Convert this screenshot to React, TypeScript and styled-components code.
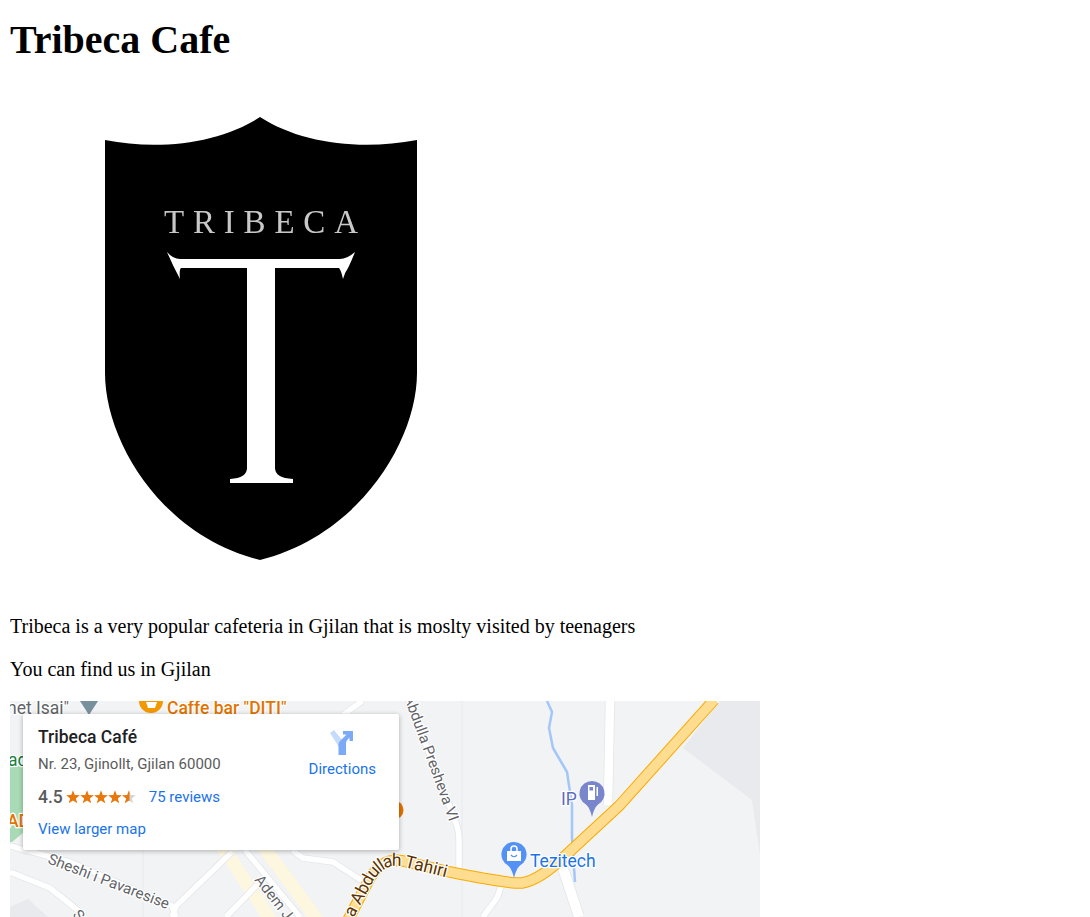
import styled, { createGlobalStyle } from 'styled-components';

const GlobalStyle = createGlobalStyle`
	html {
		overflow: hidden;
	}
	body {
		margin: 0 10px;
		background: #fff;
		color: #000;
		font-family: 'Liberation Serif', serif;
		font-size: 20px;
	}
`;
const Title = styled.h1`
	margin: 0;
	padding: 17px 0 27px;
	font-size: 40px;
	line-height: 46px;
	font-weight: 700;
`;
const Logo = styled.svg`
	display: block;
	width: 500px;
	height: 505px;
`;
const Paragraph = styled.p`
	margin: 20px 0;
	line-height: 23px;
`;
const MapFrame = styled.div`
	position: relative;
	width: 750px;
	height: 216px;
	overflow: hidden;
	background: #f1f3f4;
	font-family: Roboto, sans-serif;
`;
const MapCanvas = styled.svg`
	display: block;
	width: 750px;
	height: 216px;
`;
const MapLabel = styled.text<{ $tone: string; $size?: number; $weight?: number }>`
	font-family: Roboto, sans-serif;
	font-size: ${(props) => props.$size || 17.5}px;
	font-weight: ${(props) => props.$weight || 400};
	fill: ${(props) => props.$tone};
	stroke: #fff;
	stroke-width: 2.5px;
	stroke-linejoin: round;
	paint-order: stroke;
`;
const PlaceCard = styled.div`
	position: absolute;
	left: 13px;
	top: 13px;
	box-sizing: border-box;
	width: 376px;
	height: 136px;
	padding: 11px 15px;
	display: flex;
	justify-content: space-between;
	background: #fff;
	border-radius: 2px;
	box-shadow: 0 1px 5px rgba(0, 0, 0, 0.3);
`;
const PlaceInfo = styled.div`
	display: flex;
	flex-direction: column;
`;
const PlaceName = styled.div`
	font-size: 17.5px;
	font-weight: 500;
	line-height: 24px;
	color: #202124;
`;
const PlaceAddress = styled.div`
	margin-top: 4px;
	font-size: 15px;
	line-height: 22px;
	color: #5b5b5b;
`;
const RatingRow = styled.div`
	margin-top: 10px;
	display: flex;
	align-items: center;
	height: 24px;
`;
const RatingValue = styled.span`
	font-size: 17.5px;
	font-weight: 500;
	color: #5b5b5b;
`;
const Stars = styled.svg`
	margin: 0 13px 0 3px;
	width: 70px;
	height: 15px;
`;
const MapLink = styled.a`
	font-size: 15px;
	line-height: 20px;
	color: #1a73e8;
	text-decoration: none;
`;
const LargerMap = styled(MapLink)`
	margin-top: 10px;
`;
const DirectionsBox = styled.div`
	margin: 5px 8px 0 0;
	display: flex;
	flex-direction: column;
	align-items: center;
	gap: 4px;
`;

const STAR =
	'M7 .3 8.76 5.07 13.85 5.28 9.85 8.43 11.23 13.32 7 10.5 2.77 13.32 4.15 8.43 .15 5.28 5.24 5.07Z';
const MAIN_ROAD =
	'M714 700 619 806 566 855Q540 880 522 883 510 884 450 872L403 861Q383 857 370 878L348 920';
const THIN_ROADS = [
	'M405 690 457 826Q459 832 459 840V868',
	'M10 846 70 862 172 906 176 917',
	'M10 872 50 888 75 908 85 917',
	'M172 917 176 906 232 852',
	'M226 917 258 884',
	'M245 850 300 917',
	'M292 850 303 858 333 862 364 882',
	'M502 884 497 898 483 917',
	'M343 715 362 701',
];

const RatingStars = () => (
	<Stars viewBox='0 0 70 15'>
		<defs>
			<clipPath id='half-star'>
				<rect x='56' y='0' width='7.5' height='15' />
			</clipPath>
		</defs>
		{[0, 14, 28, 42].map((x) => (
			<path key={x} d={STAR} fill='#e8770c' transform={`translate(${x} 0)`} />
		))}
		<path d={STAR} fill='#d6d6d6' transform='translate(56 0)' />
		<g clipPath='url(#half-star)'>
			<path d={STAR} fill='#e8770c' transform='translate(56 0)' />
		</g>
	</Stars>
);

const DirectionsIcon = () => (
	<svg width='26' height='25' viewBox='0 0 26 25'>
		<path d='M1 3 5 0 13.5 10.5 13.5 17 10 17Z' fill='#c6dafc' />
		<path
			d='M9.5 25V14.5Q9.5 12.5 11 11L17.5 4.5 14 4.5 14 1 24 1 24 11 20.5 11 20.5 7.5 17.5 11Q17 12 17 14V25Z'
			fill='#7baaf7'
		/>
	</svg>
);

const CrestLogo = () => (
	<Logo viewBox='10 90 500 505'>
		<defs>
			<filter id='soft'>
				<feGaussianBlur stdDeviation='0.7' />
			</filter>
		</defs>
		<g filter='url(#soft)'>
			<path
				d='M105 140C160 151 220 143 260 117C300 143 360 151 417 140V373C417 440 360 535 260 560C160 535 105 440 105 373Z'
				fill='#000'
			/>
			<text
				x='164'
				y='233'
				textLength='194'
				fontFamily='Liberation Serif, serif'
				fontSize='33'
				fill='#c8c8c8'
			>
				TRIBECA
			</text>
			<path
				d='M167 252Q173 259 180 259H247 275 340Q347 259 355 252 351 262 348 268 345 272 343 279 341 270 339 268H275V468Q275 478 293 479V483H230V479Q247 478 247 468V268H181Q179 270 180 279 173 266 167 252Z'
				fill='#fff'
			/>
		</g>
	</Logo>
);

const MapDrawing = () => (
	<MapCanvas viewBox='10 701 750 216'>
		<defs>
			<path id='tahiri-road' d='M336 938 368 878Q383 855 405 861L470 877' />
		</defs>
		<rect x='10' y='701' width='750' height='216' fill='#f1f3f4' />
		<path d='M720 701H760V855L752 800 683 748Z' fill='#e8eaed' />
		<path d='M10 917V907L28 899 48 917Z' fill='#e8eaed' />
		<path d='M10 766H24V832L12 842H10Z' fill='#a8dab5' />
		<path d='M143 850V917M462 701V917' stroke='#e8eaed' fill='none' />
		<g fill='none' stroke='#fef7e0' strokeWidth='13'>
			<path d='M222 846 272 922' />
			<path d='M263 846 319 922' />
		</g>
		<g fill='none' stroke='#e3e5e8' strokeWidth='7'>
			{THIN_ROADS.map((d) => (
				<path key={d} d={d} />
			))}
		</g>
		<g fill='none' stroke='#fff' strokeWidth='5.5'>
			{THIN_ROADS.map((d) => (
				<path key={d} d={d} />
			))}
		</g>
		<path d='M610 701 608 805' fill='none' stroke='#e3e5e8' strokeWidth='10' />
		<path d='M610 701 608 805' fill='none' stroke='#fff' strokeWidth='8.5' />
		<path d='M563 868 579 917' fill='none' stroke='#e3e5e8' strokeWidth='11.5' />
		<path d='M563 868 579 917' fill='none' stroke='#fff' strokeWidth='10' />
		<path
			d='M547 701 552 712 549 728 553 748 567 772 572 805 572 838 575 882'
			fill='none'
			stroke='#a3c7f8'
			strokeWidth='2.5'
		/>
		<g fill='none'>
			<path d={MAIN_ROAD} stroke='#f9ab00' strokeWidth='11.5' />
			<path d={MAIN_ROAD} stroke='#fedc90' strokeWidth='9.5' />
		</g>
		<circle cx='394' cy='810' r='9.5' fill='#e37400' />
		<circle cx='151' cy='701' r='12' fill='#f29900' />
		<path d='M146 702H157L155 708H148Z' fill='#fff' />
		<path d='M80 701H98L89 715Z' fill='#78909c' />
		<MapLabel x='7' y='714' $tone='#5f6368'>
			net Isai"
		</MapLabel>
		<MapLabel x='167' y='714' $tone='#e37400' $weight={500}>
			Caffe bar "DITI"
		</MapLabel>
		<MapLabel x='8' y='766' $tone='#188038'>
			ad
		</MapLabel>
		<MapLabel x='7' y='827' $tone='#e37400' $weight={500}>
			AD
		</MapLabel>
		<MapLabel x='47' y='863' $tone='#5f6368' $size={15} transform='rotate(21 47 863)'>
			Sheshi i Pavaresise
		</MapLabel>
		<MapLabel x='72' y='915' $tone='#5f6368' $size={15} transform='rotate(50 72 915)'>
			Sa
		</MapLabel>
		<MapLabel x='254' y='880' $tone='#5f6368' $size={15} transform='rotate(52 254 880)'>
			Adem Jashari
		</MapLabel>
		<MapLabel x='404' y='697' $tone='#5f6368' $size={15} transform='rotate(70 404 697)'>
			Abdulla Presheva VI
		</MapLabel>
		<MapLabel $tone='#5c3200' dy='6'>
			<textPath href='#tahiri-road' startOffset='26'>
				a Abdullah Tahiri
			</textPath>
		</MapLabel>
		<path
			d='M592 781A12.5 12.5 0 0 1 598 804.5Q594 808 592 817 590 808 586 804.5A12.5 12.5 0 0 1 592 781Z'
			fill='#7986cb'
		/>
		<path d='M588 785H595V800H588ZM596.5 787H598V796H596.5Z' fill='#fff' />
		<rect x='589.5' y='787' width='3.5' height='3.5' fill='#7986cb' />
		<MapLabel x='561' y='805' $tone='#5c6bc0'>
			IP
		</MapLabel>
		<path
			d='M514 842A12.5 12.5 0 0 1 520 865.5Q516 869 514 878 512 869 508 865.5A12.5 12.5 0 0 1 514 842Z'
			fill='#5491f5'
		/>
		<path d='M507 851H521V861H507Z' fill='#fff' />
		<path d='M511 851V849A3 3 0 0 1 517 849V851' fill='none' stroke='#fff' strokeWidth='1.5' />
		<path d='M511 855Q514 858.5 517 855' fill='none' stroke='#5491f5' strokeWidth='1.2' />
		<MapLabel x='530' y='867' $tone='#1a73e8'>
			Tezitech
		</MapLabel>
	</MapCanvas>
);

export default function App() {
	return (
		<>
			<GlobalStyle />
			<Title>Tribeca Cafe</Title>
			<CrestLogo />
			<Paragraph>
				Tribeca is a very popular cafeteria in Gjilan that is moslty visited by
				teenagers
			</Paragraph>
			<Paragraph>You can find us in Gjilan</Paragraph>
			<MapFrame>
				<MapDrawing />
				<PlaceCard>
					<PlaceInfo>
						<PlaceName>Tribeca Café</PlaceName>
						<PlaceAddress>Nr. 23, Gjinollt, Gjilan 60000</PlaceAddress>
						<RatingRow>
							<RatingValue>4.5</RatingValue>
							<RatingStars />
							<MapLink href='#'>75 reviews</MapLink>
						</RatingRow>
						<LargerMap href='#'>View larger map</LargerMap>
					</PlaceInfo>
					<DirectionsBox>
						<DirectionsIcon />
						<MapLink href='#'>Directions</MapLink>
					</DirectionsBox>
				</PlaceCard>
			</MapFrame>
		</>
	);
}
